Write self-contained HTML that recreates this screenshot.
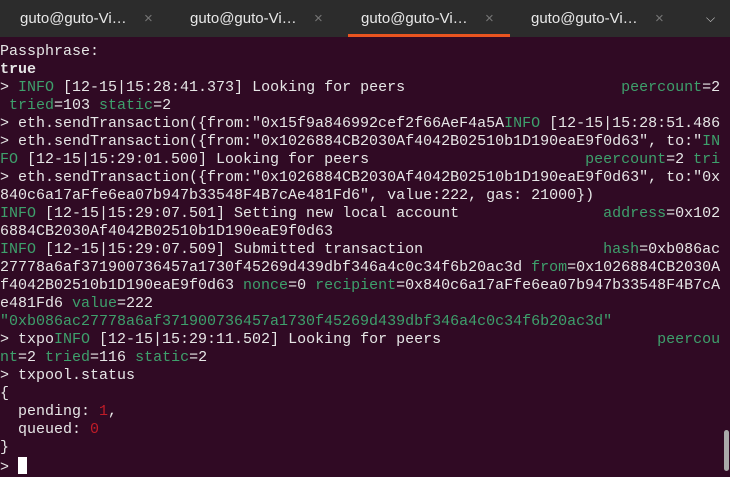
<!DOCTYPE html>
<html><head><meta charset="utf-8"><style>
body{margin:0;width:730px;height:471px;overflow:hidden;background:#300a24;font-family:"Liberation Mono",monospace;}
#tabs{position:absolute;left:0;top:0;width:730px;height:37px;background:#2c2c2c;font-family:"Liberation Sans",sans-serif;font-size:15px;color:#e8e8e8;}
.tab{position:absolute;top:0;height:37px;line-height:37px;}
.x{position:absolute;top:0;color:#777;font-size:15px;line-height:37px;}
#ul{position:absolute;left:348px;top:34px;width:162px;height:3px;background:#e95420;}
#term{position:absolute;left:0;top:43px;font-size:15px;line-height:18px;color:#e6e6e6;white-space:pre;}
.g{color:#3ea06c}.r{color:#c01c28}.b{font-weight:bold}
#cur{display:inline-block;width:9px;height:17px;background:#fff;vertical-align:-3px;}
#sb{position:absolute;left:724px;top:430px;width:5px;height:41px;background:#aaa;border-radius:3px;}
</style></head><body>
<div id="tabs">
<div class="tab" style="left:20px">guto@guto-Vi…</div><div class="x" style="left:144px">×</div>
<div class="tab" style="left:190px">guto@guto-Vi…</div><div class="x" style="left:314px">×</div>
<div class="tab" style="left:361px">guto@guto-Vi…</div><div class="x" style="left:485px">×</div>
<div class="tab" style="left:531px">guto@guto-Vi…</div><div class="x" style="left:655px">×</div>
<div class="x" style="left:706px;color:#ccc;font-size:12px">⌵</div>
<div id="ul"></div>
</div>
<div id="term">Passphrase:
<span class="b">true</span>
&gt; <span class="g">INFO</span> [12-15|15:28:41.373] Looking for peers                        <span class="g">peercount</span>=2
 <span class="g">tried</span>=103 <span class="g">static</span>=2
&gt; eth.sendTransaction({from:"0x15f9a846992cef2f66AeF4a5A<span class="g">INFO</span> [12-15|15:28:51.486
&gt; eth.sendTransaction({from:"0x1026884CB2030Af4042B02510b1D190eaE9f0d63", to:"<span class="g">IN</span>
<span class="g">FO</span> [12-15|15:29:01.500] Looking for peers                        <span class="g">peercount</span>=2 <span class="g">tri</span>
&gt; eth.sendTransaction({from:"0x1026884CB2030Af4042B02510b1D190eaE9f0d63", to:"0x
840c6a17aFfe6ea07b947b33548F4B7cAe481Fd6", value:222, gas: 21000})
<span class="g">INFO</span> [12-15|15:29:07.501] Setting new local account                <span class="g">address</span>=0x102
6884CB2030Af4042B02510b1D190eaE9f0d63
<span class="g">INFO</span> [12-15|15:29:07.509] Submitted transaction                    <span class="g">hash</span>=0xb086ac
27778a6af371900736457a1730f45269d439dbf346a4c0c34f6b20ac3d <span class="g">from</span>=0x1026884CB2030A
f4042B02510b1D190eaE9f0d63 <span class="g">nonce</span>=0 <span class="g">recipient</span>=0x840c6a17aFfe6ea07b947b33548F4B7cA
e481Fd6 <span class="g">value</span>=222
<span class="g">"0xb086ac27778a6af371900736457a1730f45269d439dbf346a4c0c34f6b20ac3d"</span>
&gt; txpo<span class="g">INFO</span> [12-15|15:29:11.502] Looking for peers                        <span class="g">peercou</span>
<span class="g">nt</span>=2 <span class="g">tried</span>=116 <span class="g">static</span>=2
&gt; txpool.status
{
  pending: <span class="r">1</span>,
  queued: <span class="r">0</span>
}
&gt; <span id="cur"></span></div>
<div id="sb"></div>
</body></html>
